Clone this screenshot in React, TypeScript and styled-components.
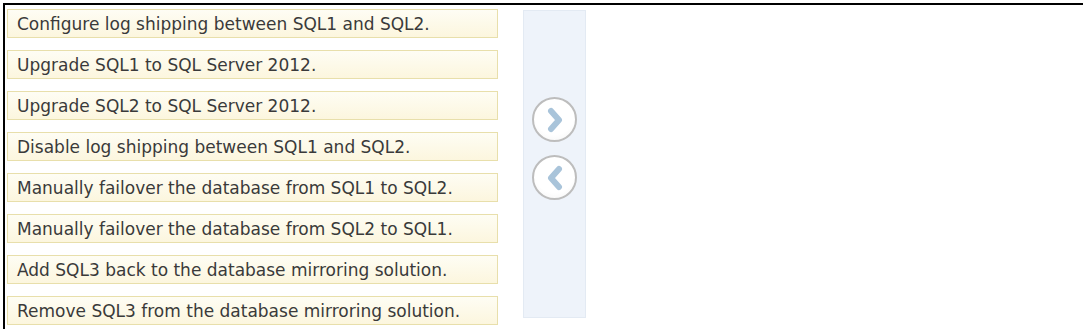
import React from "react";
import styled, { createGlobalStyle } from "styled-components";

const GlobalStyle = createGlobalStyle`
  html, body {
    margin: 0;
    padding: 0;
    background: #ffffff;
  }
  body {
    font-family: "DejaVu Sans", Verdana, sans-serif;
  }
`;

const Frame = styled.div`
  margin: 3px 0 0 3px;
  width: 1078px;
  height: 321px;
  border-top: 2px solid #000;
  border-left: 2px solid #000;
  border-bottom: 3px solid #000;
  padding: 4px 0 0 2px;
  display: flex;
  gap: 25px;
  overflow: hidden;
`;

const ItemList = styled.div`
  width: 491px;
  display: flex;
  flex-direction: column;
  gap: 12px;
`;

const Item = styled.div`
  box-sizing: border-box;
  height: 29px;
  padding: 0 9px;
  display: flex;
  align-items: center;
  border: 1px solid #e8dfab;
  background: linear-gradient(#fefdf4, #fcf6de);
  color: #3a3a3a;
  font-size: 17px;
  white-space: nowrap;
`;

const Panel = styled.div`
  box-sizing: border-box;
  margin-top: 1px;
  width: 63px;
  height: 308px;
  background: #eef3fa;
  border: 1px solid #e3eaf3;
  padding-top: 86px;
  display: flex;
  flex-direction: column;
  align-items: center;
  gap: 13px;
`;

const RoundButton = styled.button`
  width: 45px;
  height: 45px;
  padding: 0;
  border-radius: 50%;
  border: 2px solid #bdbdbd;
  background: radial-gradient(circle at 50% 40%, #ffffff 60%, #f3f3f3);
  display: flex;
  align-items: center;
  justify-content: center;
  cursor: pointer;
`;

const items = [
  "Configure log shipping between SQL1 and SQL2.",
  "Upgrade SQL1 to SQL Server 2012.",
  "Upgrade SQL2 to SQL Server 2012.",
  "Disable log shipping between SQL1 and SQL2.",
  "Manually failover the database from SQL1 to SQL2.",
  "Manually failover the database from SQL2 to SQL1.",
  "Add SQL3 back to the database mirroring solution.",
  "Remove SQL3 from the database mirroring solution.",
];

function Chevron({ dir }: { dir: "left" | "right" }) {
  const d = dir === "right" ? "M9 4 L17 13 L9 22" : "M17 4 L9 13 L17 22";
  return (
    <svg width="26" height="26" viewBox="0 0 26 26">
      <path d={d} fill="none" stroke="#a9c4da" strokeWidth="6" strokeLinecap="round" strokeLinejoin="round" />
    </svg>
  );
}

export default function App() {
  return (
    <>
      <GlobalStyle />
      <Frame>
        <ItemList>
          {items.map((t) => (
            <Item key={t}>{t}</Item>
          ))}
        </ItemList>
        <Panel>
          <RoundButton aria-label="Move right">
            <Chevron dir="right" />
          </RoundButton>
          <RoundButton aria-label="Move left">
            <Chevron dir="left" />
          </RoundButton>
        </Panel>
      </Frame>
    </>
  );
}
